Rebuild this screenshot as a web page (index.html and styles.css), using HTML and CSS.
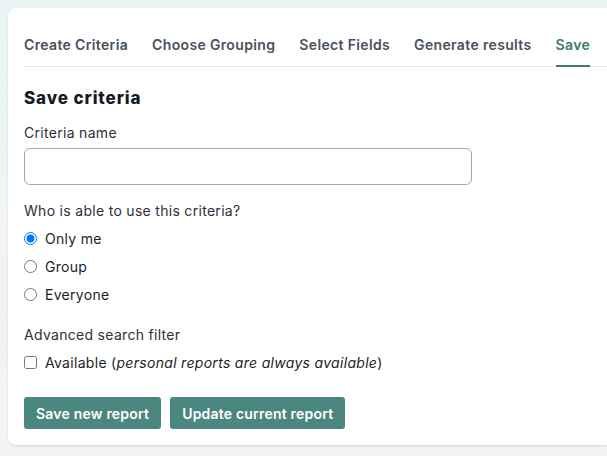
FILE: index.html
```html
<!DOCTYPE html>
<html lang="en">
<head>
    <meta charset="utf-8">
    <title>Save criteria</title>
    <link rel="stylesheet" href="styles.css">
</head>
<body>
    <div class="card">
        <nav class="tabs">
            <a class="tab">Create Criteria</a>
            <a class="tab">Choose Grouping</a>
            <a class="tab">Select Fields</a>
            <a class="tab">Generate results</a>
            <a class="tab active">Save</a>
        </nav>
        <form class="save-form">
            <h2 class="form-title">Save criteria</h2>
            <label class="field-label" for="criteria-name">Criteria name</label>
            <input class="text-input" id="criteria-name" type="text">

            <div class="field-label group-label">Who is able to use this criteria?</div>
            <label class="option"><input type="radio" name="scope" checked><span>Only me</span></label>
            <label class="option"><input type="radio" name="scope"><span>Group</span></label>
            <label class="option"><input type="radio" name="scope"><span>Everyone</span></label>

            <div class="field-label group-label">Advanced search filter</div>
            <label class="option"><input type="checkbox"><span>Available (<em>personal reports are always available</em>)</span></label>

            <div class="form-buttons">
                <button type="button">Save new report</button>
                <button type="button">Update current report</button>
            </div>
        </form>
    </div>
</body>
</html>
```

FILE: styles.css
```css
* {
    box-sizing: border-box;
}

html, body {
    height: 100%;
}

body {
    margin: 0;
    padding: 8px 0 0 8px;
    font-family: 'Inter', 'Open Sans', sans-serif;
    letter-spacing: 0.3px;
    color: #1f2430;
    background: linear-gradient(180deg, #e9f4f5 0%, #eff5f5 30%, #f4f4f4 100%);
    overflow: hidden;
}

.card {
    background-color: white;
    border-radius: 8px 0 0 8px;
    box-shadow: 0 1px 3px rgba(0, 0, 0, 0.12);
    padding: 24px 0 16px 16px;
    height: 437px;
}

.tabs {
    display: flex;
    gap: 24px;
    border-bottom: 1px solid #e5e7eb;
    font-size: 14px;
    font-weight: 600;
    letter-spacing: 0.35px;
    color: #4a505d;
}

.tab {
    padding: 4px 0 12px;
    border-bottom: 2px solid transparent;
    margin-bottom: -1px;
    cursor: pointer;
}

.tab.active {
    color: #3d7a70;
    border-bottom-color: #3d7a70;
}

.save-form {
    display: flex;
    flex-direction: column;
    align-items: flex-start;
    font-size: 14px;
}

.form-title {
    margin: 21px 0 16px;
    font-size: 17px;
    font-weight: 800;
    letter-spacing: 0.9px;
    color: #161a22;
}

.field-label {
    color: #2b303a;
    margin-bottom: 7px;
}

.text-input {
    width: 448px;
    height: 37px;
    border: 1px solid #a3a8b3;
    border-radius: 6px;
    margin-bottom: 17px;
    font: inherit;
    padding: 0 10px;
}

.group-label {
    margin-bottom: 5px;
}

.option {
    display: flex;
    align-items: center;
    gap: 8px;
    height: 28px;
    color: #1a1e27;
}

.option input {
    margin: 0;
    width: 13px;
    height: 13px;
}

.option em {
    font-style: italic;
}

.option + .group-label {
    margin-top: 18px;
}

.form-buttons {
    display: flex;
    gap: 9px;
    margin-top: 21px;
}

button {
    background-color: #4b8780;
    color: white;
    border: none;
    border-radius: 3px;
    padding: 0 12px;
    height: 32px;
    font: inherit;
    font-weight: 600;
    letter-spacing: 0.2px;
    cursor: pointer;
}
```
